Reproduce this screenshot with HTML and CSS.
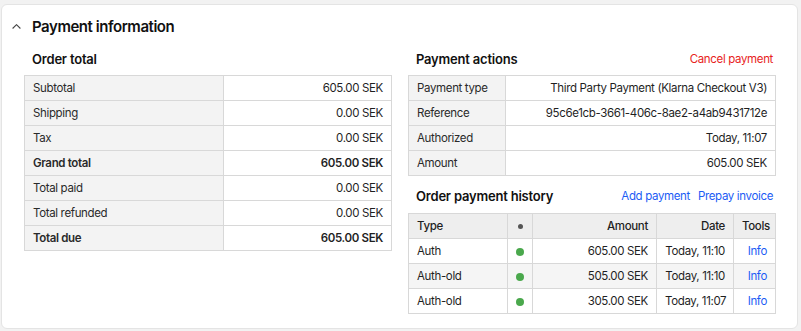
FILE: index.html
```html
<!DOCTYPE html>
<html>
<head>
<meta charset="utf-8">
<link rel="stylesheet" href="styles.css">
</head>
<body>
<div class="card">
  <div class="card-header">
    <svg class="chevron" width="9" height="5" viewBox="0 0 9 5"><path d="M0.6 4.5 L4.5 0.7 L8.4 4.5" fill="none" stroke="#444" stroke-width="1.1"/></svg>
    <h1 class="title">Payment information</h1>
  </div>
  <div class="columns">
    <div class="col">
      <div class="sec-head"><h2>Order total</h2></div>
      <table class="kv left">
        <colgroup><col class="c-lab-l"><col></colgroup>
        <tr><td class="lab">Subtotal</td><td class="val">605.00 SEK</td></tr>
        <tr><td class="lab">Shipping</td><td class="val">0.00 SEK</td></tr>
        <tr><td class="lab">Tax</td><td class="val">0.00 SEK</td></tr>
        <tr class="strong"><td class="lab">Grand total</td><td class="val">605.00 SEK</td></tr>
        <tr><td class="lab">Total paid</td><td class="val">0.00 SEK</td></tr>
        <tr><td class="lab">Total refunded</td><td class="val">0.00 SEK</td></tr>
        <tr class="strong"><td class="lab">Total due</td><td class="val">605.00 SEK</td></tr>
      </table>
    </div>
    <div class="col">
      <div class="sec-head"><h2>Payment actions</h2><div class="links"><a class="red">Cancel payment</a></div></div>
      <table class="kv right">
        <colgroup><col class="c-lab-r"><col></colgroup>
        <tr><td class="lab">Payment type</td><td class="val">Third Party Payment (Klarna Checkout V3)</td></tr>
        <tr><td class="lab">Reference</td><td class="val">95c6e1cb-3661-406c-8ae2-a4ab9431712e</td></tr>
        <tr><td class="lab">Authorized</td><td class="val">Today, 11:07</td></tr>
        <tr><td class="lab">Amount</td><td class="val">605.00 SEK</td></tr>
      </table>
      <div class="sec-head second"><h2>Order payment history</h2><div class="links"><a class="blue">Add payment</a><a class="blue">Prepay invoice</a></div></div>
      <table class="hist">
        <colgroup><col class="h1"><col class="h2"><col class="h3"><col class="h4"><col></colgroup>
        <tr class="head"><td>Type</td><td class="c"><span class="dot gray"></span></td><td class="r">Amount</td><td class="r">Date</td><td class="r">Tools</td></tr>
        <tr><td>Auth</td><td class="c"><span class="dot green"></span></td><td class="r">605.00 SEK</td><td class="r">Today, 11:10</td><td class="r"><a class="blue">Info</a></td></tr>
        <tr class="alt"><td>Auth-old</td><td class="c"><span class="dot green"></span></td><td class="r">505.00 SEK</td><td class="r">Today, 11:10</td><td class="r"><a class="blue">Info</a></td></tr>
        <tr><td>Auth-old</td><td class="c"><span class="dot green"></span></td><td class="r">305.00 SEK</td><td class="r">Today, 11:07</td><td class="r"><a class="blue">Info</a></td></tr>
      </table>
    </div>
  </div>
</div>
</body>
</html>
```
FILE: styles.css
```css
* { box-sizing: border-box; }
html, body { margin: 0; padding: 0; }
body {
  background: #f2f2f2;
  font-family: Inter, "Noto Sans", sans-serif;
  color: #1f1f1f;
  width: 801px;
  height: 331px;
  overflow: hidden;
}
.card {
  margin: 4px 0 0 1px;
  width: 797px;
  height: 325px;
  background: #fff;
  border: 1px solid #e4e4e4;
  border-radius: 6px;
  padding: 0 20px 0 22px;
}
.card-header {
  height: 42px;
  display: flex;
  align-items: center;
}
.chevron { margin: 1px 11px 0 -12px; }
.title {
  margin: 0;
  font-size: 15px;
  letter-spacing: -0.45px;
  font-weight: 600;
  color: #111;
}
.columns {
  display: flex;
  gap: 16px;
}
.col { width: 368px; }
.sec-head {
  height: 24px;
  margin-bottom: 4px;
  display: flex;
  align-items: center;
  justify-content: space-between;
  padding: 0 3px 0 8px;
}
.sec-head.second { margin-top: 8px; margin-bottom: 5px; }
.sec-head h2 {
  margin: 0;
  font-size: 13px;
  letter-spacing: -0.2px;
  font-weight: 600;
  color: #111;
}
.links { display: flex; gap: 8px; font-size: 11.5px; letter-spacing: -0.35px; }
a.red { color: #e8231c; }
a.blue { color: #1c5cf5; }
table {
  border-collapse: collapse;
  width: 368px;
  table-layout: fixed;
  font-size: 11.5px;
  letter-spacing: -0.35px;
}
td {
  border: 1px solid #d8d8d8;
  height: 25px;
  padding: 0 8px;
  white-space: nowrap;
  overflow: hidden;
}
.c-lab-l { width: 199px; }
.c-lab-r { width: 97px; }
td.lab { background: #f3f3f3; color: #2a2a2a; }
td.val { text-align: right; }
tr.strong td { font-weight: 600; }
.h1 { width: 99px; }
.h2 { width: 25px; }
.h3 { width: 124px; }
.h4 { width: 77px; }
.hist tr.head td { background: #eeeeee; font-weight: 500; }
.hist tr.alt td { background: #f5f5f5; }
.hist td.r { text-align: right; }
.hist td.c { text-align: center; padding: 0; }
.dot { display: inline-block; border-radius: 50%; vertical-align: middle; }
.dot.green { width: 8px; height: 8px; background: #4aa84c; }
.dot.gray { width: 5px; height: 5px; background: #555; }
```
